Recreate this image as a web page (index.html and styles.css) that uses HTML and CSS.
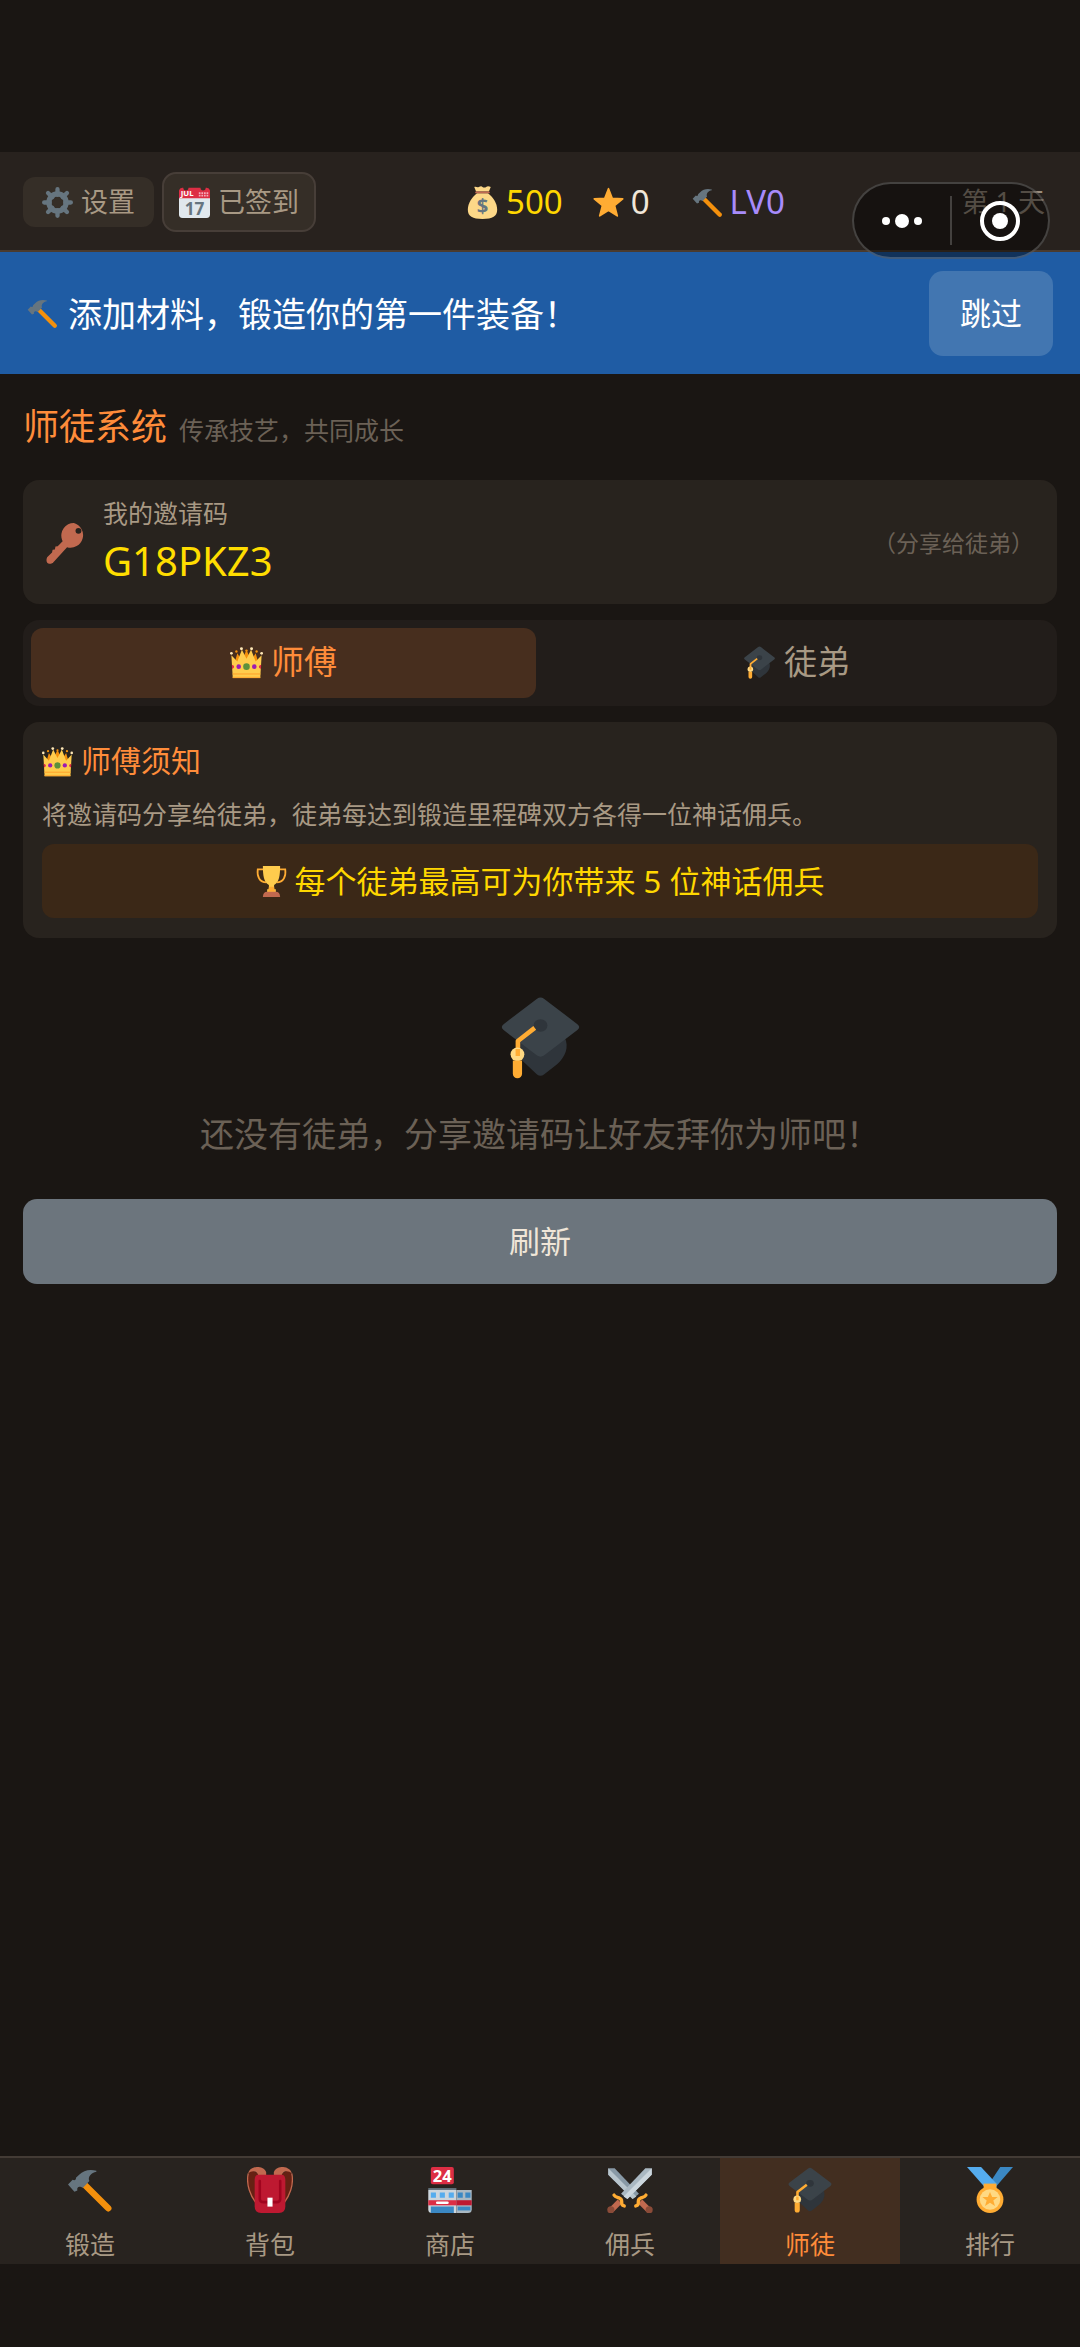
FILE: index.html
```html
<!DOCTYPE html>
<html lang="zh-CN">

<head>
    <meta charset="UTF-8">
    <meta name="viewport" content="width=device-width, initial-scale=1.0">
    <title>师徒系统</title>
    <link rel="stylesheet" href="styles.css">
</head>

<body>
    <!-- 共用图标定义 -->
    <svg class="icon-defs" aria-hidden="true">
        <symbol id="i-hammer" viewBox="0 0 36 36">
            <path stroke="#f4900c" stroke-width="5" stroke-linecap="round" d="m14 14 18.300 18.300" />
            <path fill="#66757f"
                d="M23 3C18 1.500 13 2.500 9.500 6L7 8.500c.3 1.700-1.200 2.300-2.600 1.500L.8 13.600l5 5.700 2.300-1c-.5-2.300 1-3.400 2.900-2.600l1.500.5 5-5.200C16 8 19 4.500 23 3.800z" />
        </symbol>
        <symbol id="i-crown" viewBox="0 0 36 36">
            <path fill="#f4900c" d="m4 22 4-14 5 8 5-12 5 12 5-8 4 14z" />
            <path fill="#ffcc4d" d="m3 35-1.500-25L8 17l5-13 5 10 5-10 5 13 6.500-7L33 35z" />
            <g fill="#ffe8b6">
                <circle cx="1.500" cy="8" r="1.500" />
                <circle cx="34.500" cy="8" r="1.500" />
                <circle cx="12.500" cy="3" r="1.600" />
                <circle cx="23.500" cy="3" r="1.600" />
            </g>
            <circle cx="18" cy="5" r="1.300" fill="#f4900c" />
            <circle cx="7" cy="6" r="1.300" fill="#f4900c" />
            <circle cx="29" cy="6" r="1.300" fill="#f4900c" />
            <path stroke="#ffac33" stroke-width="1.500" d="M3 30.500h30" />
            <path stroke="#ffac33" stroke-width="1.500" d="M3 34.300h30" />
            <circle cx="18" cy="22.500" r="3.600" fill="#5c913b" />
            <circle cx="9.500" cy="22.500" r="2.500" fill="#9d1bb2" />
            <circle cx="26.500" cy="22.500" r="2.500" fill="#9d1bb2" />
            <path fill="#dd2e44" d="M2 20.500q2.500.5 2.500 2T2.300 25zM34 20.500q-2.500.5-2.500 2t2.200 2.500z" />
        </symbol>
        <symbol id="i-cap" viewBox="0 0 36 36">
            <path fill="#2f353b" d="M9 18h19.500c2 4 .3 8.500-3.300 11.600L19.500 34q-1.500 1.200-3 0L9 27z" />
            <path fill="#3b4349"
                d="m16.500 1.200-14.500 11q-1.600 1.300 0 2.600l14.500 11q1.500 1 3 0l14.500-11q1.600-1.300 0-2.600l-14.500-11q-1.500-1.200-3 0z" />
            <ellipse cx="18" cy="12.800" rx="3" ry="2.700" fill="#2f353b" />
            <path fill="none" stroke="#ffac33" stroke-width="2" stroke-linejoin="round" d="M15.500 13.800 8.200 19.500V27" />
            <circle cx="8" cy="25.300" r="3" fill="#ffd983" />
            <path fill="#ffac33" d="M6 28h4v5.700a2 2 0 0 1-4 0zM7.200 23h1.900v3H7.200z" />
        </symbol>
    </svg>

    <!-- 顶部状态栏 -->
    <header class="top-bar">
        <div class="top-actions">
            <button type="button" class="chip">
                <svg class="icon" viewBox="0 0 36 36">
                    <g stroke="#66757f" stroke-width="5" stroke-linecap="round">
                        <path d="M18 2.500V9M18 27v6.500M2.500 18H9M27 18h6.500M7 7l5 5M24 24l5 5M7 29l5-5M24 12l5-5" />
                    </g>
                    <circle cx="18" cy="18" r="10" fill="none" stroke="#66757f" stroke-width="6" />
                </svg>设置
            </button>
            <button type="button" class="chip chip-signed">
                <svg class="icon" viewBox="0 0 36 36">
                    <path fill="#e1e8ed" d="M0 11h36v21a4 4 0 0 1-4 4H4a4 4 0 0 1-4-4z" />
                    <path fill="#dd2e44" d="M0 13V4a4 4 0 0 1 4-3h1a3 3 0 0 0 6 0h14a3 3 0 0 0 6 0h1a4 4 0 0 1 4 3v9z" />
                    <text x="2" y="11" class="cal-month">JUL</text>
                    <path fill="#f4abba"
                        d="M23 6h2v2h-2zM26 6h2v2h-2zM29 6h2v2h-2zM32 6h2v2h-2zM23 9h2v2h-2zM26 9h2v2h-2zM29 9h2v2h-2zM32 9h2v2h-2z" />
                    <text x="18" y="32" class="cal-day">17</text>
                </svg>已签到
            </button>
        </div>
        <div class="stats">
            <span class="stat stat-gold">
                <svg class="icon icon-md" viewBox="0 0 36 36">
                    <path fill="#fdd888" d="M12 8C6 13 2 19 2 26c0 7 5 10 16 10s16-3 16-10c0-7-4-13-10-18z" />
                    <path fill="#fdd888" d="m11 6-2-5c2-1 3 1 5 0s3-1 4 0 3 1 4 0 3-1 5 0l-2 5z" />
                    <path fill="none" stroke="#bf6952" stroke-width="2" stroke-linecap="round" d="M11 7h14" />
                    <text x="18" y="29" class="money-sign">$</text>
                </svg>500
            </span>
            <span class="stat">
                <svg class="icon" viewBox="0 0 36 36">
                    <path fill="#ffac33" stroke="#ffac33" stroke-width="2" stroke-linejoin="round"
                        d="m18 2 4.300 11.200 12.200.6-9.500 7.700 3.200 12L18 27 7.800 33.500l3.200-12L1.500 13.800l12.200-.6z" />
                </svg>0
            </span>
            <span class="stat stat-level"><svg class="icon"><use href="#i-hammer" /></svg>LV0</span>
        </div>
        <span class="day">第 1 天</span>

        <!-- 小程序胶囊按钮 -->
        <div class="capsule">
            <button type="button" aria-label="更多">
                <svg width="42" height="42" viewBox="0 0 42 42" fill="#fff">
                    <circle cx="5" cy="21" r="4" />
                    <circle cx="21" cy="21" r="7" />
                    <circle cx="37" cy="21" r="4" />
                </svg>
            </button>
            <i class="capsule-line"></i>
            <button type="button" aria-label="关闭">
                <svg width="42" height="42" viewBox="0 0 42 42">
                    <circle cx="21" cy="21" r="18" fill="none" stroke="#fff" stroke-width="4" />
                    <circle cx="21" cy="21" r="8" fill="#fff" />
                </svg>
            </button>
        </div>
    </header>

    <!-- 新手引导 -->
    <section class="guide">
        <p><svg class="icon"><use href="#i-hammer" /></svg>添加材料，锻造你的第一件装备！</p>
        <button type="button" class="skip">跳过</button>
    </section>

    <main>
        <div class="page-title">
            <h1>师徒系统</h1>
            <span>传承技艺，共同成长</span>
        </div>

        <section class="card invite">
            <svg class="icon icon-key" viewBox="0 0 36 36">
                <path fill="#c1694f"
                    d="M24.500 0A11 11 0 0 0 14 14.500l.6 1.600-4.300 4.400-2 .2-.5 2.600-2 .2-.5 2.400L1 30c-1 2-.7 5 1 5.500 1.700.7 3.500.2 4.500-1l12-13.200A11 11 0 1 0 24.500 0zm4 9.500a2.600 2.600 0 1 1 0-5.200 2.600 2.600 0 0 1 0 5.200z" />
            </svg>
            <div class="invite-info">
                <div class="invite-label">我的邀请码</div>
                <div class="invite-code">G18PKZ3</div>
            </div>
            <span class="invite-tip">（分享给徒弟）</span>
        </section>

        <div class="tabs">
            <button type="button" class="tab active"><svg class="icon icon-md"><use href="#i-crown" /></svg>师傅</button>
            <button type="button" class="tab"><svg class="icon icon-md"><use href="#i-cap" /></svg>徒弟</button>
        </div>

        <section class="card notice">
            <h2><svg class="icon"><use href="#i-crown" /></svg>师傅须知</h2>
            <p>将邀请码分享给徒弟，徒弟每达到锻造里程碑双方各得一位神话佣兵。</p>
            <div class="reward">
                <svg class="icon" viewBox="0 0 36 36">
                    <path fill="none" stroke="#ffac33" stroke-width="2" d="M9 4H2c-1 8 2 15 10 15M27 4h7c1 8-2 15-10 15" />
                    <path fill="#ffcc4d" d="M8 0h20c0 11-1 19-7 22v5h2v4H13v-4h2v-5C9 19 8 11 8 0z" />
                    <path fill="#ffac33" d="M15 24h6l1 6h-8z" />
                    <path fill="#c1694f" d="M8 36c0-4 2-6 5-6h10c3 0 5 2 5 6z" />
                </svg>每个徒弟最高可为你带来 5 位神话佣兵
            </div>
        </section>

        <div class="empty">
            <svg class="icon icon-xl"><use href="#i-cap" /></svg>
            <p>还没有徒弟，分享邀请码让好友拜你为师吧！</p>
        </div>

        <button type="button" class="refresh">刷新</button>
    </main>

    <!-- 底部导航 -->
    <nav class="bottom-nav">
        <a href="#forge"><svg class="icon icon-lg"><use href="#i-hammer" /></svg>锻造</a>
        <a href="#bag">
            <svg class="icon icon-lg" viewBox="0 0 36 36">
                <path fill="#662113" d="M3 2C-1 8 0 19 6 28l4-3V6zM33 2c4 6 3 17-3 26l-4-3V6z" />
                <path fill="none" stroke="#c1694f" d="M1 5C-1 14 3 23 7 28M35 5c2 9-2 18-6 23" />
                <path fill="#c1694f" d="M1 5C2-1 13-2 15 4v4H9C9 3 4 2 1 5zM35 5C34-1 23-2 21 4v4h6c0-5 5-6 8-3z" />
                <path fill="#be1931" d="M9 6h18q3 0 3 4v21q0 5-5 5H11q-5 0-5-5V10q0-4 3-4z" />
                <path fill="none" stroke="#a0041e" stroke-width="2" stroke-linecap="round"
                    d="M10 11v14q0 2.500 3 2.500h10q3 0 3-2.500V11" />
                <rect x="16" y="24" width="4" height="7" fill="#fff" />
            </svg>背包
        </a>
        <a href="#shop">
            <svg class="icon icon-lg" viewBox="0 0 36 36">
                <rect x="3" width="18" height="13.500" rx="1.500" fill="#dd2e44" />
                <text x="12" y="11.500" class="shop-sign">24</text>
                <path fill="#ccd6dd" d="M1 18h22v18H4q-3 0-3-3z" />
                <path fill="#aab8c2" d="M23 18h12v15q0 3-3 3h-9z" />
                <path fill="#66757f" d="M1 16.500h22V18H1z" />
                <path fill="#55acee" d="M3 20h4v4H3zM10 20h4v4h-4zM17 20h4v4h-4z" />
                <path fill="#3b88c3" d="M24 20h4v4h-4zM30 20h4v4h-4zM3 31h18v5H3z" />
                <path fill="#3b88c3" d="M24 31h10v3H24z" />
                <path fill="#be1931" d="M23 26h12v4H23z" />
                <path fill="#dd2e44" d="M1 26h22v4H1z" />
                <rect x="7" y="27" width="10" height="2" rx="1" fill="#fff" />
            </svg>商店
        </a>
        <a href="#merc">
            <svg class="icon icon-lg" viewBox="0 0 36 36">
                <path fill="#8899a6" d="M1 1h5l19 20-5 4L1 6z" />
                <path fill="#b8c5cd" d="m1 1 22 22-3 2L1 6z" />
                <path stroke="#c1694f" stroke-width="4.500" d="m26 27 6 6" />
                <circle cx="33" cy="33.500" r="2.800" fill="#8a4b38" />
                <path fill="none" stroke="#ffac33" stroke-width="2.600" stroke-linecap="round"
                    d="M22.500 30.500c2-.5 2-1.500 2-3.500s1-2.500 2.500-3 2.500-.5 3.500-2" />
                <path fill="#aab8c2" d="M35 1h-5L11 21l5 4L35 6z" />
                <path fill="#ccd6dd" d="M35 1 13 23l3 2L35 6z" />
                <path stroke="#c1694f" stroke-width="4.500" d="m10 27-6 6" />
                <circle cx="3" cy="33.500" r="2.800" fill="#8a4b38" />
                <path fill="none" stroke="#ffac33" stroke-width="2.600" stroke-linecap="round"
                    d="M13.500 30.500c-2-.5-2-1.500-2-3.500s-1-2.500-2.500-3-2.500-.5-3.500-2" />
            </svg>佣兵
        </a>
        <a href="#mentor" class="active"><svg class="icon icon-lg"><use href="#i-cap" /></svg>师徒</a>
        <a href="#rank">
            <svg class="icon icon-lg" viewBox="0 0 36 36">
                <path fill="#3b88c3" d="M26 0h10L23 15h-7z" />
                <path fill="#55acee" d="M0 0h11l12 13v4h-8z" />
                <path fill="#ffac33" d="M13 13h10v4H13z" />
                <circle cx="18" cy="25.500" r="10.500" fill="#ffac33" />
                <circle cx="18" cy="25.500" r="8" fill="#ffd983" />
                <path fill="#ffac33"
                    d="m18 19.500 1.700 4h4.300l-3.400 2.700 1.300 4.300-3.900-2.500-3.900 2.500 1.300-4.300L12 23.500h4.300z" />
            </svg>排行
        </a>
    </nav>
</body>

</html>
```

FILE: styles.css
```css
* {
    box-sizing: border-box;
}

body {
    display: flex;
    flex-direction: column;
    min-height: 100vh;
    margin: 0;
    padding: 152px 0 83px;
    background-color: #1a1613;
    color: #f0e6d8;
    font-family: "Noto Sans", "Noto Sans CJK SC", sans-serif;
    font-size: 25px;
    line-height: 36px;
}

h1,
h2,
p {
    margin: 0;
    font-weight: normal;
}

button {
    padding: 0;
    border: none;
    background: none;
    color: inherit;
    font: inherit;
    cursor: pointer;
}

a {
    color: inherit;
    text-decoration: none;
}

/* 图标 */
.icon-defs {
    position: absolute;
    width: 0;
    height: 0;
}

.icon {
    flex: none;
    width: 31px;
    height: 31px;
}

.icon-md {
    width: 33px;
    height: 33px;
}

.icon-key {
    width: 41px;
    height: 41px;
}

.icon-lg {
    width: 46px;
    height: 46px;
}

.icon-xl {
    width: 83px;
    height: 83px;
}

.cal-month {
    fill: #fff;
    font: bold 9px "Noto Sans", sans-serif;
}

.cal-day {
    fill: #66757f;
    font: bold 20px "Noto Sans", sans-serif;
    text-anchor: middle;
}

.money-sign {
    fill: #67757f;
    font: bold 22px "Noto Sans", sans-serif;
    text-anchor: middle;
}

.shop-sign {
    fill: #fff;
    font: bold 13px "Noto Sans", sans-serif;
    text-anchor: middle;
}

/* 顶部状态栏 */
.top-bar {
    position: relative;
    display: flex;
    align-items: center;
    justify-content: space-between;
    padding: 20px 23px 18px;
    border-bottom: 2px solid #4a3b2f;
    background-color: #28221e;
}

.top-actions {
    display: flex;
    align-items: center;
    gap: 8px;
}

.chip {
    display: flex;
    align-items: center;
    gap: 8px;
    padding: 7px 19px;
    border-radius: 12px;
    background-color: #352e27;
    color: #a89984;
    font-size: 27px;
}

.chip-signed {
    padding: 10px 15px;
    border: 2px solid #473e38;
    border-radius: 14px;
}

.stats {
    display: flex;
    gap: 30px;
    font-size: 33px;
}

.stat {
    display: flex;
    align-items: center;
    gap: 7px;
}

.stat-gold {
    color: #ffd700;
}

.stat-level {
    margin-left: 12px;
    color: #a78bfa;
}

.day {
    min-width: 122px;
    padding-right: 12px;
    color: #9a8d7e;
    font-size: 27px;
    text-align: right;
}

.capsule {
    position: absolute;
    top: 30px;
    right: 30px;
    z-index: 10;
    display: flex;
    align-items: center;
    width: 198px;
    height: 77px;
    border: 2px solid rgba(255, 255, 255, 0.2);
    border-radius: 39px;
    background-color: rgba(0, 0, 0, 0.45);
}

.capsule button {
    display: flex;
    flex: 1;
    justify-content: center;
}

.capsule-line {
    width: 2px;
    height: 49px;
    background-color: rgba(255, 255, 255, 0.2);
}

/* 新手引导 */
.guide {
    display: flex;
    align-items: center;
    justify-content: space-between;
    padding: 19px 27px 18px;
    background-color: #1f5ca4;
    color: #fff;
}

.guide p {
    display: flex;
    align-items: center;
    gap: 10px;
    font-size: 34px;
}

.skip {
    padding: 24px 31px 25px;
    border-radius: 14px;
    background-color: #4276b1;
    font-size: 31px;
}

/* 页面内容 */
main {
    flex: 1;
    padding: 25px 23px;
}

.page-title {
    display: flex;
    align-items: baseline;
    gap: 12px;
    margin-bottom: 25px;
    color: #6b6156;
}

.page-title h1 {
    color: #ff8c3a;
    font-size: 36px;
    line-height: 56px;
}

.card {
    margin-bottom: 16px;
    border-radius: 16px;
    background-color: #28231e;
}

.invite {
    display: flex;
    align-items: center;
    padding: 15px 23px 13px;
}

.invite-info {
    flex: 1;
    margin-left: 16px;
}

.invite-label {
    color: #a89984;
}

.invite-code {
    color: #ffdd00;
    font-size: 40px;
    line-height: 60px;
}

.invite-tip {
    color: #6b6156;
    font-size: 23px;
}

/* 师傅 / 徒弟 切换 */
.tabs {
    display: flex;
    gap: 8px;
    margin-bottom: 16px;
    padding: 8px;
    border-radius: 16px;
    background-color: #221d1a;
}

.tab {
    display: flex;
    flex: 1;
    align-items: center;
    justify-content: center;
    gap: 8px;
    padding: 16px 17px 18px;
    border-radius: 12px;
    color: #a89984;
    font-size: 33px;
}

.tab.active {
    background-color: #472e1e;
    color: #ff8c3a;
}

.notice {
    padding: 21px 19px 20px;
}

.notice h2 {
    display: flex;
    align-items: center;
    gap: 8px;
    color: #ff8c3a;
    font-size: 30px;
}

.notice p {
    margin: 17px 0 12px;
    color: #a89984;
}

.reward {
    display: flex;
    align-items: center;
    justify-content: center;
    gap: 8px;
    padding: 19px;
    border-radius: 12px;
    background-color: #3b2817;
    color: #ffd700;
    font-size: 31px;
}

.empty {
    display: flex;
    flex-direction: column;
    align-items: center;
    gap: 37px;
    padding: 42px 0 47px;
    color: #6b6156;
    font-size: 34px;
}

.refresh {
    width: 100%;
    padding: 24px 25px 25px;
    border-radius: 14px;
    background-color: #6c757d;
    font-size: 31px;
}

/* 底部导航 */
.bottom-nav {
    display: flex;
    border-top: 2px solid #433b35;
    background-color: #28231f;
    color: #a89984;
}

.bottom-nav a {
    display: flex;
    flex: 1;
    flex-direction: column;
    align-items: center;
    gap: 13px;
    padding: 9px 0 2px;
}

.bottom-nav .active {
    background-color: #422e20;
    color: #ff8c3a;
}
```
